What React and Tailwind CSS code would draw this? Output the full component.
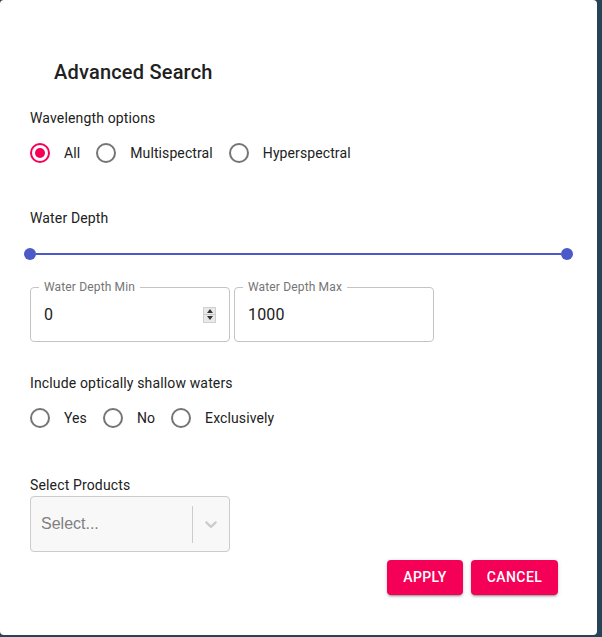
import React from "react";

function Radio({ checked, label }) {
  return (
    <div className="flex items-center">
      <div
        className={
          checked
            ? "w-[20px] h-[20px] rounded-full border-2 border-[#f50057] flex items-center justify-center"
            : "w-[20px] h-[20px] rounded-full border-2 border-[#757575]"
        }
      >
        {checked && <div className="w-[10px] h-[10px] rounded-full bg-[#f50057]" />}
      </div>
      <span className="ml-[14px] mr-[16px] text-[14px] leading-[20px] tracking-[0.1px] text-[#212121]">{label}</span>
    </div>
  );
}

function Field({ label, value, spinner }) {
  return (
    <div className="relative w-[200px] h-[55px] border border-[#c4c4c4] rounded-[4px] flex items-center pl-[13px] pr-[13px]">
      <span className="absolute -top-[8px] left-[8px] px-[5px] bg-white text-[12px] leading-[14px] tracking-[0.15px] text-[#757575]">
        {label}
      </span>
      <span className="flex-1 text-[16px] tracking-[0.15px] text-[#212121]">{value}</span>
      {spinner && (
        <div className="w-[13px] h-[16px] bg-[#e9e9e9] border border-[#d0d0d0] flex flex-col">
          <div className="flex-1 flex items-center justify-center border-b border-[#c8c8c8]">
            <div className="w-0 h-0 border-l-[3px] border-r-[3px] border-b-[4px] border-l-transparent border-r-transparent border-b-[#333]" />
          </div>
          <div className="flex-1 flex items-center justify-center">
            <div className="w-0 h-0 border-l-[3px] border-r-[3px] border-t-[4px] border-l-transparent border-r-transparent border-t-[#333]" />
          </div>
        </div>
      )}
    </div>
  );
}

const btn =
  "h-[35px] rounded-[4px] bg-[#f50057] text-white text-[14px] font-medium uppercase tracking-[0.4px] shadow-[0px_3px_1px_-2px_rgba(0,0,0,0.2),0px_2px_2px_0px_rgba(0,0,0,0.14),0px_1px_5px_0px_rgba(0,0,0,0.12)]";

const label = "text-[14px] leading-[20px] tracking-[0.15px] text-[#212121]";

export default function App() {
  return (
    <div className="w-[602px] h-[637px] bg-[#274456] font-['Roboto',sans-serif] overflow-hidden">
      <div className="w-[597px] h-[635px] bg-white rounded-[4px] flex flex-col">
        <div className="pt-[56px] pl-[54px]">
          <h2 className="text-[20px] leading-[32px] font-medium tracking-[0.2px] text-[#212121]">Advanced Search</h2>
        </div>
        <div className="pl-[30px] pr-[24px] flex flex-col">
          <div className={"mt-[20px] " + label}>Wavelength options</div>
          <div className="mt-[15px] flex items-center h-[20px]">
            <Radio checked label="All" />
            <Radio label="Multispectral" />
            <Radio label="Hyperspectral" />
          </div>
          <div className={"mt-[45px] " + label}>Water Depth</div>
          <div className="mt-[20px] -ml-[6px] flex items-center h-[12px]">
            <div className="w-[12px] h-[12px] rounded-full bg-[#4c59c9]" />
            <div className="flex-1 h-[2px] bg-[#4c59c9]" />
            <div className="w-[12px] h-[12px] rounded-full bg-[#4c59c9]" />
          </div>
          <div className="mt-[27px] flex gap-[4px]">
            <Field label="Water Depth Min" value="0" spinner />
            <Field label="Water Depth Max" value="1000" />
          </div>
          <div className={"mt-[31px] " + label}>Include optically shallow waters</div>
          <div className="mt-[15px] flex items-center h-[20px]">
            <Radio label="Yes" />
            <Radio label="No" />
            <Radio label="Exclusively" />
          </div>
          <div className={"mt-[47px] " + label}>Select Products</div>
          <div className="mt-[1px] w-[200px] h-[56px] border border-[#cccccc] rounded-[4px] bg-[#f8f8f8] flex items-center">
            <span className="flex-1 pl-[10px] text-[16px] text-[#808080] font-['Liberation_Sans',sans-serif]">
              Select...
            </span>
            <div className="w-px h-[37px] bg-[#cccccc]" />
            <div className="w-[36px] flex items-center justify-center">
              <svg width="20" height="20" viewBox="0 0 20 20" fill="#cccccc">
                <path d="M4.516 7.548c0.436-0.446 1.043-0.481 1.576 0l3.908 3.747 3.908-3.747c0.533-0.481 1.141-0.446 1.574 0 0.436 0.445 0.408 1.197 0 1.615-0.406 0.418-4.695 4.502-4.695 4.502-0.217 0.223-0.502 0.335-0.787 0.335s-0.57-0.112-0.789-0.335c0 0-4.287-4.084-4.695-4.502s-0.436-1.17 0-1.615z" />
              </svg>
            </div>
          </div>
          <div className="mt-[8px] pr-[15px] flex justify-end gap-[8px]">
            <button className={btn + " w-[76px]"}>Apply</button>
            <button className={btn + " w-[87px]"}>Cancel</button>
          </div>
        </div>
      </div>
    </div>
  );
}
